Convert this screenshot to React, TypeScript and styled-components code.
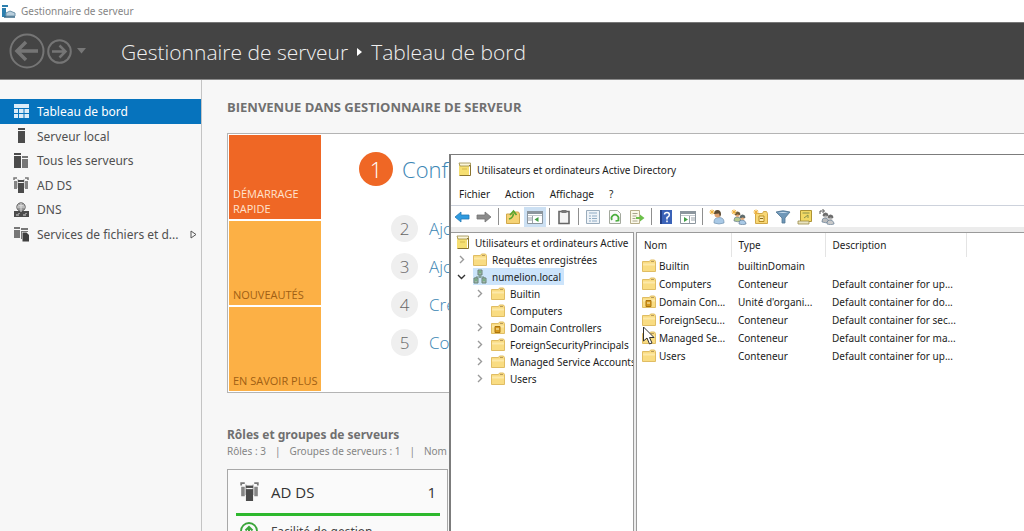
import React from 'react';
import styled, { createGlobalStyle } from 'styled-components';

const GlobalStyle = createGlobalStyle`
  *, *::before, *::after { box-sizing: border-box; }
  body { margin: 0; font-family: "Noto Sans", "Open Sans", sans-serif; color: #444; }
  button { font: inherit; color: inherit; border: 0; padding: 0; background: none; }
  a { color: inherit; text-decoration: none; }
  h1, h2, ol, ul, p { margin: 0; padding: 0; }
  ol, ul { list-style: none; }
  svg { display: block; flex: none; }
`;

const displayFont = '"Open Sans", "Noto Sans", sans-serif';

const Desktop = styled.div`
  position: relative;
  display: flex;
  flex-direction: column;
  height: 100vh;
  overflow: hidden;
  background: #f7f7f7;
`;

const TitleBar = styled.div`
  display: flex;
  align-items: center;
  gap: 5px;
  height: 22px;
  flex: none;
  padding-left: 2px;
  background: #fff;
  color: #858585;
  font-size: 10px;
`;

const Banner = styled.header`
  display: flex;
  align-items: center;
  height: 58px;
  flex: none;
  padding-left: 9px;
  background: #444;
  border-top: 1px solid #777;
  border-bottom: 1px solid #8a8a8a;
  color: #f0f0f0;
`;

const NavButton = styled.button`
  display: block;
  margin-right: 2px;
`;

const Crumbs = styled.h1`
  display: flex;
  align-items: center;
  gap: 9px;
  margin-left: 31px;
  padding-top: 2px;
  font-family: ${displayFont};
  font-size: 21px;
  font-weight: 300;
  line-height: 28px;
  white-space: nowrap;
`;

const Body = styled.div`
  display: flex;
  flex: 1;
  min-height: 0;
`;

const Sidebar = styled.nav`
  width: 202px;
  flex: none;
  padding-top: 19px;
  border-right: 1px solid #c4c4c4;
`;

const SideList = styled.ul`
  display: grid;
  grid-auto-rows: 1fr;
  height: 147px;
`;

const SideItem = styled.a<{ $active?: boolean }>`
  display: flex;
  align-items: center;
  gap: 8px;
  height: 100%;
  padding: 1px 4px 0 13px;
  background: ${(p) => (p.$active ? '#0673bd' : 'transparent')};
  color: ${(p) => (p.$active ? '#fff' : '#505050')};
  font-size: 12px;
  white-space: nowrap;
`;

const SideArrow = styled.span`
  margin-left: auto;
`;

const Content = styled.main`
  flex: 1;
  min-width: 0;
  padding: 18px 0 0 25px;
`;

const Heading = styled.h2<{ $caps?: boolean }>`
  color: #707070;
  font-family: ${(p) => (p.$caps ? displayFont : 'inherit')};
  font-size: ${(p) => (p.$caps ? 13 : 12)}px;
  font-weight: 700;
  line-height: 18px;
  white-space: nowrap;
`;

const Welcome = styled.section`
  display: flex;
  margin-top: 17px;
  padding: 1px;
  background: #fff;
  border: 1px solid #b4b4b4;
  border-right: 0;
`;

const Tiles = styled.div`
  display: grid;
  grid-template-rows: repeat(3, 84px);
  gap: 2px;
  width: 92px;
  flex: none;
`;

const Tile = styled.button<{ $primary?: boolean }>`
  display: flex;
  align-items: flex-end;
  padding: 0 0 3px 4px;
  background: ${(p) => (p.$primary ? '#ef6725' : '#fcb045')};
  color: ${(p) => (p.$primary ? '#ffe3cf' : '#a05f14')};
  font-family: ${displayFont};
  font-size: 11px;
  line-height: 15px;
  text-align: left;
`;

const Steps = styled.ol`
  flex: 1;
  min-width: 0;
  padding: 17px 0 0 38px;
  font-family: ${displayFont};
`;

const Step = styled.li<{ $first?: boolean }>`
  display: flex;
  align-items: center;
  gap: ${(p) => (p.$first ? 9 : 11)}px;
  margin: ${(p) => (p.$first ? '0 0 29px' : '0 0 11px 32px')};
  color: #3b86b4;
  font-size: ${(p) => (p.$first ? 22 : 17)}px;
  font-weight: 300;
  line-height: 27px;
  white-space: nowrap;
`;

const StepNumber = styled.span<{ $first?: boolean }>`
  display: flex;
  align-items: center;
  justify-content: center;
  width: ${(p) => (p.$first ? 34 : 27)}px;
  height: ${(p) => (p.$first ? 34 : 27)}px;
  border-radius: 50%;
  background: ${(p) => (p.$first ? '#ef6725' : '#efefef')};
  color: ${(p) => (p.$first ? '#fff' : '#666')};
`;

const Roles = styled.section`
  margin-top: 33px;
`;

const Summary = styled.p`
  display: flex;
  gap: 9px;
  color: #858585;
  font-size: 10px;
  line-height: 15px;
  white-space: nowrap;
`;

const RoleCard = styled.article`
  width: 221px;
  margin-top: 10px;
  padding: 0 7px 0 8px;
  background: #fafafa;
  border: 1px solid #a8a8a8;
`;

const RoleHead = styled.div`
  display: flex;
  align-items: center;
  gap: 12px;
  height: 46px;
  padding: 0 4px;
  border-bottom: 3px solid #2db82d;
  color: #333;
  font-family: ${displayFont};
  font-size: 15px;
`;

const RoleCount = styled.span`
  margin-left: auto;
`;

const RoleLine = styled.div`
  display: flex;
  align-items: center;
  gap: 13px;
  height: 30px;
  padding-left: 4px;
  color: #444;
  font-size: 12px;
`;

const Window = styled.section`
  position: absolute;
  top: 154px;
  right: 0;
  bottom: 0;
  left: 449px;
  display: flex;
  flex-direction: column;
  background: #fff;
  border-top: 1px solid #7c7c7c;
  border-left: 2px solid #7c7c7c;
  color: #1c1c1c;
  font-size: 10px;
`;

const WindowTitle = styled.div`
  display: flex;
  align-items: center;
  gap: 5px;
  height: 29px;
  flex: none;
  padding-left: 7px;
`;

const MenuBar = styled.div`
  display: flex;
  align-items: center;
  gap: 15px;
  height: 21px;
  flex: none;
  padding: 0 0 2px 8px;
`;

const Toolbar = styled.div`
  display: flex;
  align-items: center;
  height: 22px;
  flex: none;
  border-top: 1px solid #cdd2dc;
`;

const Tool = styled.button<{ $on?: boolean }>`
  display: flex;
  align-items: center;
  justify-content: center;
  width: 22px;
  height: 20px;
  background: ${(p) => (p.$on ? '#cce0f3' : 'transparent')};
`;

const ToolGap = styled.span`
  width: 1px;
  height: 17px;
  margin: 0 3px;
  background: #8f8f8f;
`;

const Panes = styled.div`
  display: flex;
  gap: 2px;
  flex: 1;
  min-height: 0;
  padding-top: 5px;
  background: #ececec;
`;

const TreePane = styled.div`
  width: 183px;
  flex: none;
  overflow: hidden;
  padding-top: 1px;
  background: #fff;
  border: solid #9a9a9a;
  border-width: 1px 1px 0 0;
`;

const TreeRow = styled.li<{ $depth: number }>`
  display: flex;
  align-items: center;
  height: 17px;
  padding-left: ${(p) => [5, 6, 24][p.$depth]}px;
  white-space: nowrap;
`;

const Twisty = styled.span`
  display: flex;
  width: 16px;
  flex: none;
`;

const TreeLabel = styled.span<{ $selected?: boolean }>`
  display: flex;
  align-items: center;
  gap: 5px;
  height: 17px;
  padding-right: 3px;
  background: ${(p) => (p.$selected ? '#cce4fb' : 'transparent')};
`;

const ListPane = styled.div`
  flex: 1;
  min-width: 0;
  background: #fff;
  border: solid #9a9a9a;
  border-width: 1px 0 0 1px;
`;

const Table = styled.table`
  width: 100%;
  table-layout: fixed;
  border-collapse: collapse;
  white-space: nowrap;
`;

const Th = styled.th<{ $w?: number }>`
  width: ${(p) => (p.$w ? `${p.$w}px` : 'auto')};
  height: 24px;
  padding: 0 0 0 7px;
  border-right: ${(p) => (p.$w ? '1px solid #e4e4e4' : '0')};
  font-weight: 400;
  text-align: left;
`;

const Td = styled.td`
  height: 18px;
  padding: 0 0 0 7px;
`;

const NameCell = styled.div`
  display: flex;
  align-items: center;
  gap: 3px;
  margin-left: -2px;
`;

const Pointer = styled.span`
  position: absolute;
  top: 171px;
  left: 191px;
`;

/* Icons */

const Tower = ({ x, y, w, h, fill = '#4b4b4b' }: { x: number; y: number; w: number; h: number; fill?: string }) => (
  <>
    <rect x={x} y={y} width={w} height={2} fill={fill} />
    <rect x={x} y={y + 3} width={w} height={h - 3} fill={fill} />
  </>
);

const AdIcon = ({ size = 16 }: { size?: number }) => (
  <svg width={size} height={size} viewBox="0 0 16 16">
    <path d="M4 1H1v2M12 1h3v2" fill="none" stroke="#777" strokeWidth="1.500" />
    <path d="M1 4h3v8H1zM12 4h3v8h-3z" fill="#858585" />
    <path d="M4.500 2h1v9h-1zM10.500 2h1v9h-1z" fill="#aaa" />
    <Tower x={5} y={3} w={6} h={13} />
  </svg>
);

const sideIcons: Record<string, React.ReactNode> = {
  board: (
    <svg width="16" height="16" viewBox="0 0 16 16">
      <path d="M1 0h15v4H1zM1 5h4v4H1zM6 5h4.500v4H6zM11.500 5H16v4h-4.500zM1 10h4v4H1zM6 10h4.500v4H6zM11.500 10H16v4h-4.500z" fill="#dcecf8" />
    </svg>
  ),
  server: <svg width="16" height="16"><Tower x={5} y={0} w={7} h={15} /></svg>,
  servers: (
    <svg width="16" height="16">
      <Tower x={1} y={0} w={7} h={15} />
      <Tower x={9} y={3} w={6} h={12} fill="#777" />
    </svg>
  ),
  ad: <AdIcon />,
  dns: (
    <svg width="16" height="16" viewBox="0 0 16 16">
      <circle cx="8" cy="5" r="4.200" fill="#999" stroke="#666" />
      <path d="M4 5h8M8 1v8M5 3q3 1.500 6 0" stroke="#ddd" fill="none" />
      <path d="M1 9h6v1h2V9h7v6H1z" fill="#4b4b4b" />
      <path d="M3 13h3M6 11v1M10 13h3M13 11v1" stroke="#ddd" />
    </svg>
  ),
  files: (
    <svg width="16" height="16" viewBox="0 0 16 16">
      <path d="M1 1h6v2H1zM1 4h6v8H1z" fill="#777" />
      <path d="M8 2h7v2H8zM8 5h7v1H9v7H8z" fill="#777" />
      <path d="M9.500 6.500h4l2.500 2.500v6.500H9.500z" fill="#3f3f3f" />
    </svg>
  ),
};

const Folder = ({ ou }: { ou?: boolean }) => (
  <svg width="14" height="14" viewBox="0 0 14 14">
    <path d="M.5 2.500h7l1-1.500h4l1 1.500v10H.5z" fill="#f9dc82" stroke="#e0bd64" />
    <path d="M1 4.500h12v2H1z" fill="#fde9a8" />
    <path d="M9 2.500h3" stroke="#b79a5c" />
    {ou && <path d="M4 5.500h5v6H4z" fill="#d79a1c" stroke="#a9730f" />}
    {ou && <path d="M5 8h3" stroke="#fff3c4" />}
  </svg>
);

const Book = () => (
  <svg width="14" height="15" viewBox="0 0 14 15">
    <path d="M1 1.500h10v12H1z" fill="#f6df72" />
    <path d="M1 1h11.500v3H2z" fill="#fbf6da" stroke="#9b8c4a" strokeWidth=".8" />
    <path d="M11 3.500h1.500v10H1.500" fill="none" stroke="#8a7430" />
    <path d="M4 7h5" stroke="#d6b94c" />
  </svg>
);

const DomainIcon = () => (
  <svg width="14" height="15" viewBox="0 0 14 15">
    <path d="M7 5v4M3 10V8h8v2" stroke="#6d8a7a" fill="none" />
    <path d="M5 1h4v5H5zM1 9h4v5H1zM9 9h4v5H9z" fill="#9fb7ab" stroke="#6b8577" />
    <path d="M6 3h2M2 11h2M10 11h2" stroke="#4fae62" />
  </svg>
);

const Chevron = ({ open }: { open?: boolean }) => (
  <svg width="9" height="9" viewBox="0 0 9 9">
    <path d={open ? 'M1 3l3.500 3.500L8 3' : 'M3 1l3.500 3.500L3 8'} fill="none" stroke={open ? '#333' : '#9a9a9a'} strokeWidth="1.400" />
  </svg>
);

const Person = ({ x, y, hair, body }: { x: number; y: number; hair: string; body: string }) => (
  <g transform={`translate(${x} ${y})`}>
    <path d="M0 8q0-3 3-3t4 3v1q-3 1.500-7 0z" fill={body} stroke="#55718c" strokeWidth=".6" />
    <circle cx="3.500" cy="2.800" r="2.300" fill={hair === '#6c6c6c' ? '#b5b5b5' : '#e0a878'} />
    <path d="M1 2.800Q1 0 3.500 0T6 2.600Q4 1.300 1 2.800z" fill={hair} stroke={hair} />
  </g>
);

const Spark = () => <path d="M3 .5v5M.5 3h5M1.200 1.200l3.600 3.600M4.800 1.200L1.200 4.800" stroke="#f0b13a" strokeWidth="1" />;

const ToolIcon = ({ children }: { children: React.ReactNode }) => (
  <svg width="16" height="16" viewBox="0 0 16 16">{children}</svg>
);

const Panel = ({ flip }: { flip?: boolean }) => (
  <>
    <path d="M.5 2.500h15v12H.5z" fill="#fff" stroke="#8c969e" />
    <path d="M0 2h16v3H0z" fill="#8c969e" />
    <path d="M1 6.500h14" stroke="#c3c9ce" />
    <path d={flip ? 'M9.500 7v7M11 9h4M11 11h4' : 'M5.500 7v7M1 9h4M1 11h4'} stroke="#9aa3aa" />
    <path d={flip ? 'M4 8l4 2.500-4 2.500z' : 'M11.500 8l-4 2.500 4 2.500z'} fill="#43a047" />
  </>
);

type ToolDef = { label: string; on?: boolean; icon: React.ReactNode } | null;

const tools: ToolDef[] = [
  { label: 'Précédent', icon: <path d="M1 8l6-5v3h8v4H7v3z" fill="#2f9be0" stroke="#2479b5" strokeWidth=".8" /> },
  { label: 'Suivant', icon: <path d="M15 8L9 3v3H1v4h8v3z" fill="#8b8b8b" stroke="#737373" strokeWidth=".8" /> },
  null,
  {
    label: 'Dossier parent',
    icon: (
      <>
        <path d="M1.500 5h6l1-2h5l1 2v9.500h-13z" fill="#f5d274" stroke="#d1a84a" />
        <path d="M4 10q4-1 4.500-5.500M5 6l3.500-4 3 4" fill="none" stroke="#58a630" strokeWidth="1.700" />
      </>
    ),
  },
  { label: 'Arborescence', on: true, icon: <Panel /> },
  null,
  {
    label: 'Coller',
    icon: (
      <>
        <path d="M3 2.500h10v12H3z" fill="#f4f4f4" stroke="#666" strokeWidth="1.600" />
        <path d="M5.500 1h5v3h-5z" fill="#777" />
      </>
    ),
  },
  null,
  {
    label: 'Propriétés',
    icon: (
      <>
        <path d="M1.500 1.500h13v13h-13z" fill="#eef3f8" stroke="#9aacbc" />
        <path d="M4 4h8M4 7h2M7 7h5M4 9.500h2M7 9.500h5M4 12h2M7 12h5" stroke="#8fabc4" />
      </>
    ),
  },
  {
    label: 'Actualiser',
    icon: (
      <>
        <path d="M2.500 1.500h8l3 3v10h-11z" fill="#fafafa" stroke="#a3a99d" />
        <path d="M5 11a3.500 3.500 0 1 1 6 0M8.500 12l3-.5v-3" fill="none" stroke="#4caf3f" strokeWidth="1.700" />
      </>
    ),
  },
  {
    label: 'Exporter la liste',
    icon: (
      <>
        <path d="M1.500 1.500h9v13h-9z" fill="#fbf8e8" stroke="#b7ae8a" />
        <path d="M3.500 4.500h5M3.500 7h4M3.500 9.500h3M3.500 12h5" stroke="#a9a48e" />
        <path d="M7 8h4V5.500L15.500 9 11 12.500V10H7z" fill="#6cc04a" />
      </>
    ),
  },
  null,
  {
    label: 'Aide',
    icon: (
      <>
        <path d="M2 1h12v14H2z" fill="#3a62b8" />
        <path d="M2 1h2v14H2z" fill="#233f86" />
        <path d="M6.500 5.500Q6.500 3.500 9 3.500T11.300 6Q11.300 7.500 9 8.500v2M9 11.500v1.800" fill="none" stroke="#fff" strokeWidth="1.500" />
      </>
    ),
  },
  { label: 'Volet Actions', icon: <Panel flip /> },
  null,
  {
    label: 'Nouvel utilisateur',
    icon: (
      <>
        <path d="M5 13q0-4.500 5-4.500t5 4.500v1q-5 2-10 0z" fill="#a9c9e6" stroke="#6788a6" strokeWidth=".6" />
        <circle cx="8.500" cy="5.500" r="3" fill="#dca172" />
        <path d="M5 5Q5 1 8.500 1T12 5.500L11 8 10 4.500z" fill="#5b4a33" />
        <Spark />
      </>
    ),
  },
  { label: 'Nouveau groupe', icon: <><Person x={3} y={3} hair="#6a5a3c" body="#b5c98e" /><Person x={8} y={6} hair="#5d6b6d" body="#a9c9e6" /><Spark /></> },
  {
    label: 'Nouvelle unité',
    icon: (
      <>
        <path d="M2.500 4.500h7l1-2h3l1 2v10h-12z" fill="#f8d774" stroke="#d1a84a" />
        <path d="M6 7h5v5.500H6z" fill="#fdebae" stroke="#b98d22" />
        <path d="M7 9.500h3" stroke="#8a6a1a" />
        <Spark />
      </>
    ),
  },
  {
    label: 'Filtrer',
    icon: (
      <>
        <path d="M1 3q7-2.500 14 0l-5 6v5H7V9z" fill="#6f97b8" stroke="#527693" strokeWidth=".8" />
        <path d="M3 3.600q5-1.300 10 0-5 1-10 0z" fill="#c7dced" />
      </>
    ),
  },
  {
    label: 'Rechercher',
    icon: (
      <>
        <path d="M3.500 1.500h11v11h-11z" fill="#f3d964" stroke="#ae9436" />
        <path d="M1 12h11v3H1z" fill="#e9e3c0" stroke="#9b8b46" strokeWidth=".8" />
        <path d="M5.500 4h7M7 9l4-3M11 9V6" stroke="#88914c" />
      </>
    ),
  },
  {
    label: 'Ajouter à un groupe',
    icon: (
      <>
        <path d="M1 5V2h4M3.500 0l2 2-2 2" fill="none" stroke="#555" />
        <Person x={3} y={4} hair="#6c6c6c" body="#bcbcbc" />
        <Person x={8} y={6} hair="#6c6c6c" body="#c9c9c9" />
      </>
    ),
  },
];

const sideItems = [
  { icon: 'board', label: 'Tableau de bord', active: true },
  { icon: 'server', label: 'Serveur local' },
  { icon: 'servers', label: 'Tous les serveurs' },
  { icon: 'ad', label: 'AD DS' },
  { icon: 'dns', label: 'DNS' },
  { icon: 'files', label: 'Services de fichiers et d...', more: true },
];

const steps = ['Confi', 'Ajou', 'Ajou', 'Cré', 'Con'];

const tree = [
  { label: 'Requêtes enregistrées', depth: 1, state: 'closed' },
  { label: 'numelion.local', depth: 1, state: 'open' },
  { label: 'Builtin', depth: 2, state: 'closed' },
  { label: 'Computers', depth: 2, state: 'leaf' },
  { label: 'Domain Controllers', depth: 2, state: 'closed', ou: true },
  { label: 'ForeignSecurityPrincipals', depth: 2, state: 'closed' },
  { label: 'Managed Service Accounts', depth: 2, state: 'closed' },
  { label: 'Users', depth: 2, state: 'closed' },
];

const rows = [
  ['Builtin', 'builtinDomain', ''],
  ['Computers', 'Conteneur', 'Default container for up...'],
  ['Domain Con...', "Unité d'organi...", 'Default container for do...'],
  ['ForeignSecu...', 'Conteneur', 'Default container for sec...'],
  ['Managed Se...', 'Conteneur', 'Default container for ma...'],
  ['Users', 'Conteneur', 'Default container for up...'],
];

const DirectoryWindow = () => (
  <Window aria-label="Utilisateurs et ordinateurs Active Directory">
    <WindowTitle><Book />Utilisateurs et ordinateurs Active Directory</WindowTitle>
    <MenuBar>
      {['Fichier', 'Action', 'Affichage', '?'].map((m) => <button key={m}>{m}</button>)}
    </MenuBar>
    <Toolbar>
      {tools.map((t, i) =>
        t ? <Tool key={i} $on={t.on} aria-label={t.label}><ToolIcon>{t.icon}</ToolIcon></Tool> : <ToolGap key={i} />,
      )}
    </Toolbar>
    <Panes>
      <TreePane>
        <ul>
          <TreeRow $depth={0}><TreeLabel><Book />Utilisateurs et ordinateurs Active</TreeLabel></TreeRow>
          {tree.map((n) => (
            <TreeRow key={n.label} $depth={n.depth}>
              <Twisty>{n.state !== 'leaf' && <Chevron open={n.state === 'open'} />}</Twisty>
              <TreeLabel $selected={n.state === 'open'}>
                {n.state === 'open' ? <DomainIcon /> : <Folder ou={n.ou} />}
                {n.label}
              </TreeLabel>
            </TreeRow>
          ))}
        </ul>
      </TreePane>
      <ListPane>
        <Table>
          <thead>
            <tr><Th $w={94}>Nom</Th><Th $w={94}>Type</Th><Th $w={141}>Description</Th><Th as="td" /></tr>
          </thead>
          <tbody>
            {rows.map(([name, type, description]) => (
              <tr key={name}>
                <Td><NameCell><Folder ou={name.startsWith('Domain')} />{name}</NameCell></Td>
                <Td>{type}</Td>
                <Td>{description}</Td>
                <Td />
              </tr>
            ))}
          </tbody>
        </Table>
      </ListPane>
    </Panes>
    <Pointer>
      <svg width="14" height="20" viewBox="0 0 14 20">
        <path d="M1.500 1v14l3.500-3 2.500 6 2.500-1-2.500-5.500H12z" fill="#fff" stroke="#333" />
      </svg>
    </Pointer>
  </Window>
);

export default function App() {
  return (
    <Desktop>
      <GlobalStyle />
      <TitleBar>
        <svg width="14" height="15" viewBox="0 0 14 15">
          <path d="M0 1h6v2H0zM0 4h4v9H0z" fill="#2d7fae" />
          <path d="M4 12V9l4-2 5 2v3z" fill="#b9cfdd" stroke="#7195ab" />
          <path d="M2 13h11" stroke="#3c6b88" strokeWidth="1.500" />
        </svg>
        Gestionnaire de serveur
      </TitleBar>
      <Banner>
        <NavButton aria-label="Précédent">
          <svg width="36" height="36" viewBox="0 0 36 36" fill="none" stroke="#757575">
            <circle cx="18" cy="18" r="16.500" strokeWidth="2" />
            <path d="M29 18H9M17 9l-9 9 9 9" strokeWidth="3.500" />
          </svg>
        </NavButton>
        <NavButton aria-label="Suivant">
          <svg width="25" height="25" viewBox="0 0 25 25" fill="none" stroke="#757575">
            <circle cx="12.500" cy="12.500" r="11.300" strokeWidth="2" />
            <path d="M5 12.500h13M12.500 6.500l6 6-6 6" strokeWidth="2.500" />
          </svg>
        </NavButton>
        <NavButton aria-label="Historique">
          <svg width="14" height="8"><path d="M3 1h9L7.500 6.500z" fill="#777" /></svg>
        </NavButton>
        <Crumbs>
          <span>Gestionnaire de serveur</span>
          <svg width="5" height="8"><path d="M0 0l5 4-5 4z" fill="#fff" /></svg>
          <span>Tableau de bord</span>
        </Crumbs>
      </Banner>
      <Body>
        <Sidebar>
          <SideList>
            {sideItems.map((s) => (
              <li key={s.label}>
                <SideItem href="#" $active={s.active}>
                  {sideIcons[s.icon]}
                  {s.label}
                  {s.more && (
                    <SideArrow>
                      <svg width="7" height="9"><path d="M1 1l5 3.500L1 8z" fill="none" stroke="#555" /></svg>
                    </SideArrow>
                  )}
                </SideItem>
              </li>
            ))}
          </SideList>
        </Sidebar>
        <Content>
          <Heading $caps>BIENVENUE DANS GESTIONNAIRE DE SERVEUR</Heading>
          <Welcome>
            <Tiles>
              <Tile $primary>DÉMARRAGE RAPIDE</Tile>
              <Tile>NOUVEAUTÉS</Tile>
              <Tile>EN SAVOIR PLUS</Tile>
            </Tiles>
            <Steps>
              {steps.map((s, i) => (
                <Step key={i} $first={i === 0}>
                  <StepNumber $first={i === 0}>{i + 1}</StepNumber>
                  <a href="#">{s}</a>
                </Step>
              ))}
            </Steps>
          </Welcome>
          <Roles>
            <Heading>Rôles et groupes de serveurs</Heading>
            <Summary>
              <span>Rôles : 3</span><span>|</span><span>Groupes de serveurs : 1</span><span>|</span><span>Nom</span>
            </Summary>
            <RoleCard>
              <RoleHead><AdIcon size={19} />AD DS<RoleCount>1</RoleCount></RoleHead>
              <RoleLine>
                <svg width="18" height="18" viewBox="0 0 18 18" fill="none" stroke="#3aa53a">
                  <circle cx="9" cy="9" r="8" strokeWidth="1.800" />
                  <path d="M9 14V5M5.500 8.500L9 5l3.500 3.500" strokeWidth="2" />
                </svg>
                Facilité de gestion
              </RoleLine>
            </RoleCard>
          </Roles>
        </Content>
      </Body>
      <DirectoryWindow />
    </Desktop>
  );
}
